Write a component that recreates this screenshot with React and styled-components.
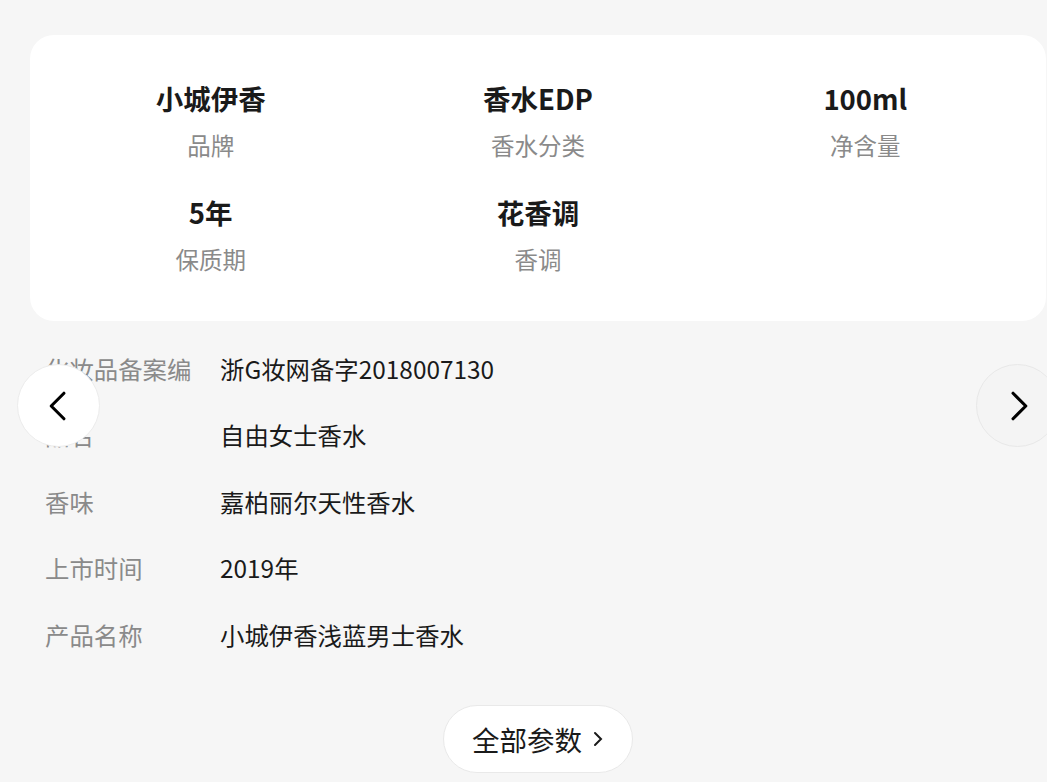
import React from 'react';
import styled, { createGlobalStyle } from 'styled-components';

const GlobalStyle = createGlobalStyle`
  html, body {
    margin: 0;
    padding: 0;
    background: #f6f6f6;
    overflow: hidden;
  }
  body {
    font-family: "Noto Sans CJK SC", "Noto Sans", sans-serif;
  }
`;

const Page = styled.div`
  position: relative;
  width: 1016px;
  margin-left: 30px;
  padding-top: 35px;
`;

const Card = styled.div`
  background: #ffffff;
  border-radius: 24px;
  padding: 45px 17px 45px;
  display: grid;
  grid-template-columns: repeat(3, 1fr);
  row-gap: 32px;
`;

const Item = styled.div`
  display: flex;
  flex-direction: column;
  align-items: center;
`;

const Value = styled.div`
  font-size: 27.5px;
  font-weight: 700;
  line-height: 36px;
  color: #1a1a1a;
`;

const Label = styled.div`
  margin-top: 12px;
  font-size: 23.5px;
  line-height: 34px;
  color: #8a8a8a;
`;

const SpecList = styled.div`
  margin-top: 14px;
  padding: 0 15px;
`;

const SpecRow = styled.div`
  display: flex;
  align-items: center;
  height: 66.5px;
  font-size: 24.4px;
`;

const SpecKey = styled.div`
  width: 175px;
  flex-shrink: 0;
  color: #8a8a8a;
  white-space: nowrap;
  overflow: hidden;
`;

const SpecVal = styled.div`
  color: #1a1a1a;
`;

const Footer = styled.div`
  display: flex;
  justify-content: center;
  margin-top: 37px;
`;

const MoreButton = styled.button`
  display: flex;
  align-items: center;
  gap: 10px;
  height: 68px;
  padding: 0 28px;
  border-radius: 34px;
  border: 1px solid #e9e9e9;
  background: #ffffff;
  font-family: inherit;
  font-size: 27.5px;
  color: #1a1a1a;
  cursor: pointer;
`;

const Arrow = styled.button`
  position: absolute;
  top: 364px;
  ${(p) => (p.$side === 'left' ? 'left: -13px;' : 'left: 946px;')}
  width: 83px;
  height: 83px;
  border-radius: 50%;
  border: 1px solid ${(p) => (p.$disabled ? '#e8e8e8' : '#ececec')};
  background: ${(p) => (p.$disabled ? '#f4f4f4' : '#ffffff')};
  display: flex;
  align-items: center;
  justify-content: center;
  padding: 0;
  cursor: pointer;
`;

const params = [
  { value: '小城伊香', label: '品牌' },
  { value: '香水EDP', label: '香水分类' },
  { value: '100ml', label: '净含量' },
  { value: '5年', label: '保质期' },
  { value: '花香调', label: '香调' },
];

const specs = [
  ['化妆品备案编', '浙G妆网备字2018007130'],
  ['品名', '自由女士香水'],
  ['香味', '嘉柏丽尔天性香水'],
  ['上市时间', '2019年'],
  ['产品名称', '小城伊香浅蓝男士香水'],
];

const Chevron = ({ dir, size = 34, stroke = 2.2 }) => (
  <svg width={size} height={size} viewBox="0 0 24 24" fill="none">
    <path
      d={dir === 'left' ? 'M15.5 3 L6.5 12 L15.5 21' : 'M8.5 3 L17.5 12 L8.5 21'}
      stroke="#000"
      strokeWidth={stroke}
      strokeLinecap="round"
      strokeLinejoin="round"
    />
  </svg>
);

export default function App() {
  return (
    <>
      <GlobalStyle />
      <Page>
        <Card>
          {params.map((p) => (
            <Item key={p.label}>
              <Value>{p.value}</Value>
              <Label>{p.label}</Label>
            </Item>
          ))}
        </Card>

        <SpecList>
          {specs.map(([k, v]) => (
            <SpecRow key={k}>
              <SpecKey>{k}</SpecKey>
              <SpecVal>{v}</SpecVal>
            </SpecRow>
          ))}
        </SpecList>

        <Footer>
          <MoreButton>
            全部参数
            <svg width="12" height="16" viewBox="0 0 12 16" fill="none">
              <path d="M3 2 L9 8 L3 14" stroke="#1a1a1a" strokeWidth="2" strokeLinecap="round" />
            </svg>
          </MoreButton>
        </Footer>

        <Arrow $side="left">
          <Chevron dir="left" />
        </Arrow>
        <Arrow $side="right" $disabled>
          <Chevron dir="right" />
        </Arrow>
      </Page>
    </>
  );
}
